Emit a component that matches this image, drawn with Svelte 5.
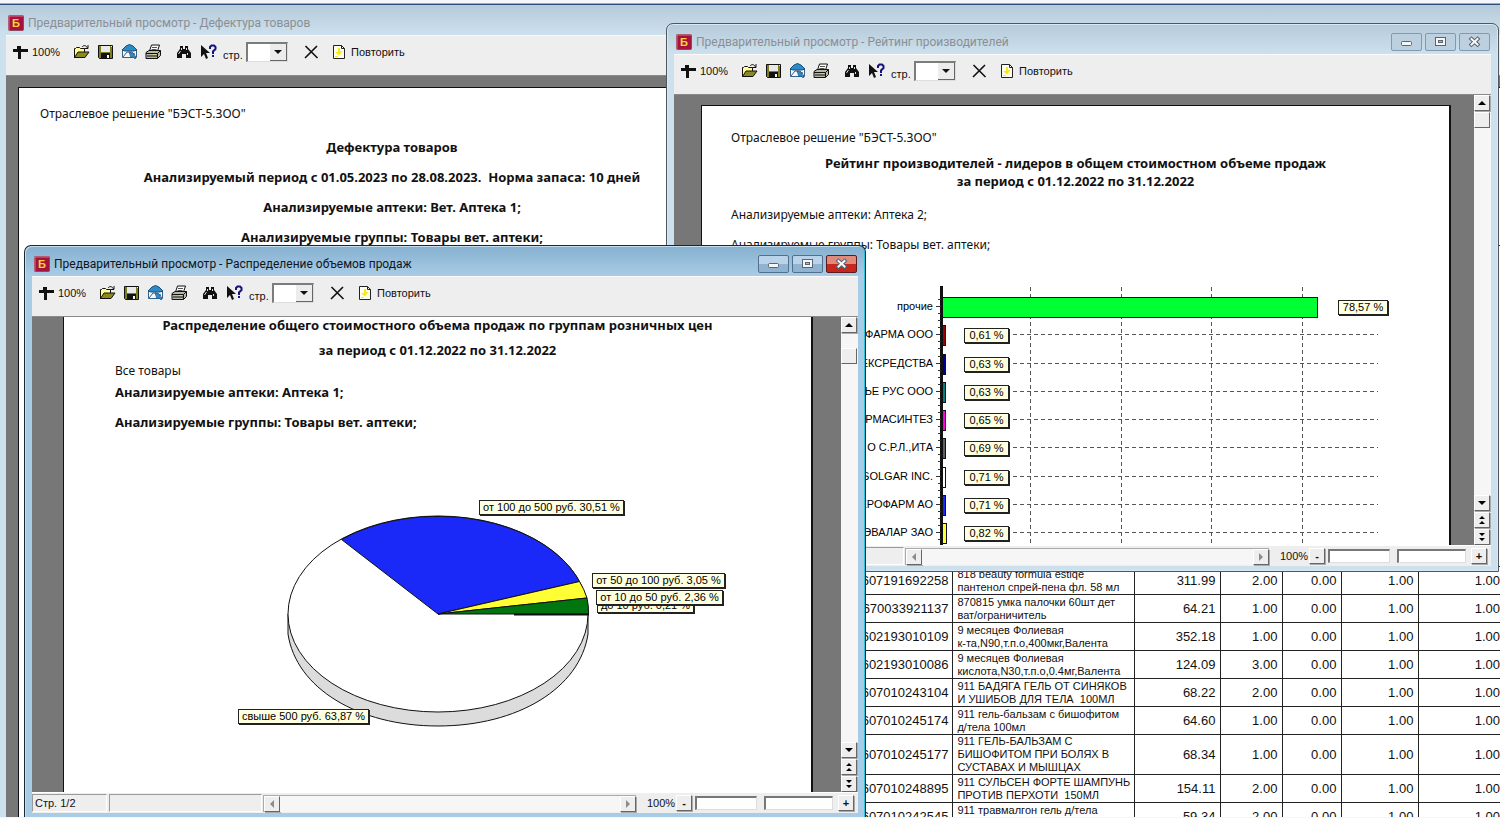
<script>
	const rows = [
		{ code: '607191692258', name: ['818 beauty formula estiqe', 'пантенол спрей-пена фл. 58 мл'], price: '311.99', qty: '2.00' },
		{ code: '670033921137', name: ['870815 умка палочки 60шт дет', 'ват/ограничитель'], price: '64.21', qty: '1.00' },
		{ code: '602193010109', name: ['9 месяцев Фолиевая', 'к-та,N90,т.п.о,400мкг,Валента'], price: '352.18', qty: '1.00' },
		{ code: '602193010086', name: ['9 месяцев Фолиевая', 'кислота,N30,т.п.о,0.4мг,Валента'], price: '124.09', qty: '3.00' },
		{ code: '607010243104', name: ['911 БАДЯГА ГЕЛЬ ОТ СИНЯКОВ', 'И УШИБОВ ДЛЯ ТЕЛА  100МЛ'], price: '68.22', qty: '2.00' },
		{ code: '607010245174', name: ['911 гель-бальзам с бишофитом', 'д/тела 100мл'], price: '64.60', qty: '1.00' },
		{ code: '607010245177', name: ['911 ГЕЛЬ-БАЛЬЗАМ С', 'БИШОФИТОМ ПРИ БОЛЯХ В', 'СУСТАВАХ И МЫШЦАХ'], price: '68.34', qty: '1.00' },
		{ code: '607010248895', name: ['911 СУЛЬСЕН ФОРТЕ ШАМПУНЬ', 'ПРОТИВ ПЕРХОТИ  150МЛ'], price: '154.11', qty: '2.00' },
		{ code: '607010242545', name: ['911 травмалгон гель д/тела', ''], price: '59.34', qty: '2.00' }
	];

	const bars = [
		{ name: 'прочие', value: '78,57 %', width: 375, color: '#00ff33' },
		{ name: 'ФАРМА ООО', value: '0,61 %', width: 3, color: '#a00000' },
		{ name: 'ЕКСРЕДСТВА', value: '0,63 %', width: 3, color: '#000090' },
		{ name: 'ВЬЕ РУС ООО', value: '0,63 %', width: 3, color: '#008080' },
		{ name: 'АРМАСИНТЕЗ', value: '0,65 %', width: 3, color: '#ff00e0' },
		{ name: 'О С.Р.Л.,ИТА', value: '0,69 %', width: 3, color: '#606060' },
		{ name: 'SOLGAR INC.', value: '0,71 %', width: 3, color: '#ffffff' },
		{ name: 'ЕРОФАРМ АО', value: '0,71 %', width: 3, color: '#1a28f8' },
		{ name: 'ЭВАЛАР ЗАО', value: '0,82 %', width: 4, color: '#ffff33' }
	];
	const barY = (i) => Math.round(51 + i * 28.25);

	const marks = [
		{ text: 'до 10 руб. 0,21 %', x: 533, y: 168, w: 97 },
		{ text: 'от 50 до 100 руб. 3,05 %', x: 528, y: 143, w: 133 },
		{ text: 'от 10 до 50 руб. 2,36 %', x: 532, y: 160, w: 127 },
		{ text: 'от 100 до 500 руб. 30,51 %', x: 415, y: 70, w: 145 },
		{ text: 'свыше 500 руб. 63,87 %', x: 174, y: 279, w: 131 }
	];
</script>

{#snippet titlebar(title, active, buttons)}
	<header class="titlebar">
		<svg class="logo" width="16" height="16" viewBox="0 0 16 16">
			<rect x="0.5" y="0.5" width="15" height="15" rx="1" fill="#a5123c" stroke="#8c4a5c" />
			<path d="M1 15V1h14" fill="none" stroke="#d8708c" />
			<text x="8" y="12" text-anchor="middle" font-size="11" font-weight="bold" fill="#ffd23c">Б</text>
		</svg>
		<h1>{title}</h1>
		{#if buttons}
			<div class="winbtns">
				<button aria-label="Свернуть">
					<svg width="29" height="16" viewBox="0 0 29 16"><rect x="9.5" y="7.5" width="10" height="4" rx="1" fill="#f4f6f8" stroke="#5a6472" /></svg>
				</button>
				<button aria-label="Развернуть">
					<svg width="29" height="16" viewBox="0 0 29 16">
						<rect x="9.5" y="3.5" width="10" height="8" fill="#f4f6f8" stroke="#5a6472" />
						<rect x="12.5" y="6.5" width="4" height="2" fill="#a8c0d4" stroke="#5a6472" />
					</svg>
				</button>
				<button class:close={active} aria-label="Закрыть">
					<svg width="29" height="16" viewBox="0 0 29 16">
						<path d="M11.500 5l6 5.500M17.500 5l-6 5.500" stroke="#56606e" stroke-width="4" stroke-linecap="square" />
						<path d="M11.500 5l6 5.500M17.500 5l-6 5.500" stroke="#f8f8f8" stroke-width="2" stroke-linecap="square" />
					</svg>
				</button>
			</div>
		{/if}
	</header>
{/snippet}

{#snippet toolbar(id)}
	<div class="toolbar">
		<button class="zoom">
			<svg width="15" height="16" viewBox="0 0 15 16"><path d="M4 2h4v3h7v3H8v7H5V8H0V5h4z" fill="#111" /></svg>
			100%
		</button>
		<button class="tool" aria-label="Открыть">
			<svg width="17" height="16" viewBox="0 0 17 16">
				<path d="M1.500 14V4.500h1l1-1h3l1 1h4V8" fill="#ffff9a" stroke="#111" />
				<path d="M1.500 13.500L5 8h11l-4 5.500z" fill="#8c8a1e" stroke="#111" />
				<path d="M9 3c1.500-2 4-2 5.500 1M15 1v3.500h-3.500" fill="none" stroke="#111" />
			</svg>
		</button>
		<button class="tool" aria-label="Сохранить">
			<svg width="15" height="16" viewBox="0 0 15 16">
				<path d="M.5 1.500h14v13h-13l-1-1z" fill="#7e7d20" stroke="#111" />
				<rect x="3" y="2" width="9" height="6" fill="#e8e8e8" />
				<rect x="3" y="9" width="9" height="6" fill="#111" />
				<rect x="9" y="11" width="2" height="3" fill="#f4f4f4" />
				<rect x="13" y="2" width="1" height="1" fill="#eee" />
			</svg>
		</button>
		<button class="tool" aria-label="Отправить">
			<svg width="17" height="16" viewBox="0 0 17 16">
				<path d="M1.500 6L8.500 1l7 5v7.500h-14z" fill="#f4f8fb" stroke="#33628a" />
				<path d="M1 6l4-4 3.500-1.500L12 2l4 4-3 1H4z" fill="#2b8bc8" stroke="#1d4f78" />
				<path d="M2 13l4-5h5l4 5" fill="none" stroke="#557" />
				<path d="M8 8l6 2-2 1 3 3-1 1-3-3-1 2z" fill="#2a8fd0" stroke="#154a70" stroke-width=".6" />
			</svg>
		</button>
		<button class="tool" aria-label="Печать">
			<svg width="17" height="16" viewBox="0 0 17 16">
				<path d="M4.500 7l2-6h8l-2 6" fill="#fff" stroke="#111" />
				<path d="M7 3.500h5M6.500 5.500h5" stroke="#555" />
				<path d="M1 8.500L4 6.500h11.500v5l-3 3H1z" fill="#b8b8a8" stroke="#111" />
				<path d="M1 9.500h11.500l3-3M12.500 9.500v5M3 14.500h8" fill="none" stroke="#111" />
				<path d="M2 12h10" stroke="#111" />
				<rect x="8" y="10" width="3" height="1" fill="#e8dc30" />
			</svg>
		</button>
		<button class="tool find" aria-label="Найти">
			<svg width="16" height="16" viewBox="0 0 16 16">
				<path d="M4 2h3v3h2V2h3v3l3 4v5h-5v-4H6v4H1V9l3-4z" fill="#111" />
				<path d="M5.500 4v2M4.500 7l-2 3M10.500 4v2M11.500 9v2" stroke="#ddd" />
			</svg>
		</button>
		<button class="tool" aria-label="Справка">
			<svg width="17" height="16" viewBox="0 0 17 16">
				<path d="M1 1v12l3-3 2 5 2-1-2-5h4z" fill="#111" />
				<path d="M10 5V3l1.500-1.500h2.500L15.500 3v2L13 7.500V10" fill="none" stroke="#14147c" stroke-width="2" />
				<rect x="12" y="11" width="2" height="2" fill="#14147c" />
			</svg>
		</button>
		<label for={id}>стр.</label>
		<span class="combo">
			<select {id}><option></option></select>
			<svg width="16" height="16" viewBox="0 0 16 16"><path d="M4 6h8l-4 4z" fill="#111" /></svg>
		</span>
		<button class="tool cancel" aria-label="Закрыть просмотр">
			<svg width="16" height="16" viewBox="0 0 16 16"><path d="M2.500 2l12 12M14 2L2 14" fill="none" stroke="#111" stroke-width="1.600" /></svg>
		</button>
		<button class="repeat">
			<svg width="12" height="14" viewBox="0 0 12 14">
				<path d="M.5.5h8l3 3v10H.5z" fill="#fffff0" stroke="#222" />
				<path d="M8.500.5v3h3" fill="none" stroke="#222" />
				<path d="M5 3h2v3h2.500L6 10.500 2 7h3z" fill="#f8ea10" />
				<path d="M2 11h3v1H2z" fill="#f8ea10" />
			</svg>
			Повторить
		</button>
	</div>
{/snippet}

{#snippet vscroll(gap)}
	<div class="vscroll">
		<button class="sb" aria-label="Вверх"><svg width="14" height="14" viewBox="0 0 14 14"><path d="M3 9h8L7 5z" /></svg></button>
		<div class="track"><div class="thumb" class:gap></div></div>
		<button class="sb" aria-label="Вниз"><svg width="14" height="14" viewBox="0 0 14 14"><path d="M3 5h8L7 9z" /></svg></button>
		<button class="sb" aria-label="Предыдущая страница"><svg width="14" height="14" viewBox="0 0 14 14"><path d="M4 6h6L7 3zM4 11h6L7 8z" /></svg></button>
		<button class="sb" aria-label="Следующая страница"><svg width="14" height="14" viewBox="0 0 14 14"><path d="M4 3h6L7 6zM4 8h6l-3 3z" /></svg></button>
	</div>
{/snippet}

{#snippet statusbar(page)}
	<footer class="statusbar">
		<div class="panel pages">{page}</div>
		<div class="panel info"></div>
		<div class="hscroll">
			<button class="sb" aria-label="Влево"><svg width="14" height="14" viewBox="0 0 14 14"><path class="dim" d="M9 3v8L5 7z" /></svg></button>
			<div class="track"></div>
			<button class="sb" aria-label="Вправо"><svg width="14" height="14" viewBox="0 0 14 14"><path class="dim" d="M5 3v8l4-4z" /></svg></button>
		</div>
		<span class="percent">100%</span>
		<button class="sb">-</button>
		<div class="field"></div>
		<div class="field wide"></div>
		<button class="sb plus">+</button>
	</footer>
{/snippet}

{#snippet mark(text, x, y, w)}
	<rect x={x + 1} y={y + 1} width={w} height="15" fill="#222" />
	<rect x={x + 0.5} y={y + 0.5} width={w - 1} height="14" fill="#ffffe1" stroke="#222" />
	<text x={x + w / 2} y={y + 11} text-anchor="middle">{text}</text>
{/snippet}

<main class="desktop">
	<section class="window back">
		{@render titlebar('Предварительный просмотр - Дефектура товаров', false, false)}
		<div class="client">
			{@render toolbar('page-defect')}
			<div class="view">
				<article class="sheet">
					<div class="report">
						<p>Отраслевое решение "БЭСТ-5.ЗОО"</p>
						<h2>Дефектура товаров</h2>
						<h2>Анализируемый период с 01.05.2023 по 28.08.2023.&nbsp; Норма запаса: 10 дней</h2>
						<h2>Анализируемые аптеки: Вет. Аптека 1;</h2>
						<h2>Анализируемые группы: Товары вет. аптеки;</h2>
					</div>
					<table>
						<colgroup>
							<col />
							<col class="c-name" />
							<col class="c-price" />
							<col class="c-qty" />
							<col class="c-rest" />
							<col class="c-norm" />
							<col class="c-need" />
						</colgroup>
						<tbody>
							<tr class="head"><td colspan="7"></td></tr>
							{#each rows as row}
								<tr>
									<td class="code">{row.code}</td>
									<td class="name">{#each row.name as line}<div>{line}</div>{/each}</td>
									<td>{row.price}</td>
									<td>{row.qty}</td>
									<td>0.00</td>
									<td>1.00</td>
									<td>1.00</td>
								</tr>
							{/each}
						</tbody>
					</table>
				</article>
			</div>
		</div>
	</section>

	<section class="window rating">
		{@render titlebar('Предварительный просмотр - Рейтинг производителей', false, true)}
		<div class="client">
			{@render toolbar('page-rating')}
			<div class="view">
				<article class="sheet">
					<p>Отраслевое решение "БЭСТ-5.ЗОО"</p>
					<h2>Рейтинг производителей - лидеров в общем стоимостном объеме продаж</h2>
					<h2 class="period">за период с 01.12.2022 по 31.12.2022</h2>
					<p class="first">Анализируемые аптеки: Аптека 2;</p>
					<p class="second">Анализируемые группы: Товары вет. аптеки;</p>
					<svg class="chart" width="746" height="300" viewBox="0 0 746 300">
						<g stroke="#555" stroke-dasharray="4 3">
							{#each [328, 419, 509, 600] as x}
								<line x1={x + 0.5} y1="32" x2={x + 0.5} y2="300" />
							{/each}
							{#each bars.slice(1) as bar, i}
								<line x1="311" y1={barY(i + 1) + 0.5} x2="676" y2={barY(i + 1) + 0.5} />
							{/each}
						</g>
						<rect x="238" y="31" width="3" height="269" fill="#111" />
						{#each bars as bar, i}
							<path d="M234 {barY(i) + 0.5}h5M236 {barY(i) - 6.5}h3M236 {barY(i) + 7.500}h3M236 {barY(i) + 14.500}h3" stroke="#333" />
							<rect x="240.5" y={barY(i) - 8.5} width={bar.width} height="20" fill={bar.color} stroke="#111" />
							<text x="231" y={barY(i) + 4} text-anchor="end">{bar.name}</text>
							{#if i === 0}
								{@render mark(bar.value, 636, barY(i) - 6, 50)}
							{:else}
								{@render mark(bar.value, 262, barY(i) - 6, 45)}
							{/if}
						{/each}
					</svg>
				</article>
				{@render vscroll(false)}
			</div>
			{@render statusbar('')}
		</div>
	</section>

	<section class="window active">
		{@render titlebar('Предварительный просмотр - Распределение объемов продаж', true, true)}
		<div class="client">
			{@render toolbar('page-prices')}
			<div class="view">
				<article class="sheet">
					<h2>Распределение общего стоимостного объема продаж по группам розничных цен</h2>
					<h2 class="period">за период с 01.12.2022 по 31.12.2022</h2>
					<p class="all">Все товары</p>
					<p class="shops">Анализируемые аптеки: Аптека 1;</p>
					<p class="groups">Анализируемые группы: Товары вет. аптеки;</p>
					<svg class="pie" width="746" height="340" viewBox="0 0 746 340">
						<g stroke="#111" stroke-linejoin="round">
							<path d="M224 184v20C232 258 294 296 374 296S516 258 524 204v-20z" fill="#dcdcdc" />
							<ellipse cx="374" cy="184" rx="150" ry="98" fill="#fff" />
							<path d="M374 184L277.500 109.500A150 98 0 0 1 515.500 151.500z" fill="#1a28f8" />
							<path d="M374 184L515.500 151.500A150 98 0 0 1 523 168z" fill="#ffff33" />
							<path d="M374 184L523 168A150 98 0 0 1 524.500 184z" fill="#007510" />
							<path d="M450 184.500h75" stroke-width="2" />
						</g>
						{#each marks as m}
							{@render mark(m.text, m.x, m.y, m.w)}
						{/each}
					</svg>
				</article>
				{@render vscroll(true)}
			</div>
			{@render statusbar('Стр. 1/2')}
		</div>
	</section>
</main>

<style>
	:global(body) {
		background: #f3f7fb;
		overflow: hidden;
	}

	.desktop {
		position: relative;
		height: 100vh;
		overflow: hidden;
		font-family: "Liberation Sans", Arial, sans-serif;
		font-size: 11px;
		color: #111;
	}

	button,
	select {
		font: inherit;
		color: inherit;
		margin: 0;
		padding: 0;
		border: 0;
		background: none;
	}

	button svg {
		display: block;
		flex: none;
	}

	/* windows */
	.window {
		position: absolute;
		box-sizing: border-box;
		display: flex;
		flex-direction: column;
		padding: 0 7px 5px;
		border: 1px solid #50565e;
		border-radius: 7px 7px 0 0;
		background: linear-gradient(#b5cad9, #cde0ee 30px);
		box-shadow: inset 0 0 0 1px #d8e8f4;
		overflow: hidden;
	}

	.back {
		left: -2px;
		right: 0;
		top: 4px;
		bottom: 1px;
		padding: 0 0 0 7px;
		border-width: 1px 0 0 1px;
		border-color: #2e4f78;
		border-radius: 0;
		box-shadow: 0 -1px 0 #7ab4e4;
	}

	.rating {
		left: 666px;
		right: 1px;
		top: 23px;
		height: 549px;
	}

	.active {
		left: 24px;
		width: 842px;
		top: 245px;
		bottom: 1px;
		padding-bottom: 4px;
		border-color: #1c2630;
		border-bottom: 0;
		background: linear-gradient(#86b0cf, #a8cce6 30px);
		box-shadow: inset -1px 0 0 #2fc4dc, inset 1px 1px 0 #c4dff0;
	}

	.titlebar {
		flex: none;
		display: flex;
		align-items: center;
		height: 30px;
		padding: 5px 1px 0 2px;
		box-sizing: border-box;
	}

	.logo {
		margin-right: 4px;
	}

	h1 {
		flex: 1;
		margin: 0;
		font: 12px/16px Roboto, "Segoe UI", sans-serif;
		color: #8b8f94;
		white-space: nowrap;
	}

	.active h1 {
		color: #10151c;
	}

	.winbtns {
		display: flex;
		gap: 3px;
	}

	.winbtns button {
		width: 31px;
		height: 18px;
		box-sizing: border-box;
		border: 1px solid #8398b2;
		border-radius: 2px;
		background: #bdd0e0;
		overflow: hidden;
	}

	.active .winbtns button {
		border-color: #51708e;
		background: linear-gradient(#b9d3e8 50%, #8fb3d0 50%);
	}

	.active .winbtns .close {
		border-color: #5c1a1a;
		background: linear-gradient(#e08a7c 50%, #c8281c 50%);
	}

	.client {
		flex: 1;
		min-height: 0;
		display: flex;
		flex-direction: column;
		background: #eee;
	}

	/* toolbar */
	.toolbar {
		flex: none;
		display: flex;
		align-items: center;
		box-sizing: border-box;
		height: 41px;
		padding: 0 7px 7px;
		border-top: 1px solid #fafafa;
		border-bottom: 1px solid #8a8a8a;
		white-space: nowrap;
	}

	.zoom,
	.repeat {
		display: flex;
		align-items: center;
		gap: 4px;
	}

	.zoom {
		width: 56px;
	}

	.repeat {
		gap: 6px;
		margin-left: 10px;
	}

	.tool {
		display: flex;
		justify-content: center;
		width: 24px;
	}

	.find {
		margin-left: 7px;
	}

	.toolbar label {
		width: 23px;
		margin-left: 3px;
		padding-top: 6px;
	}

	.combo {
		position: relative;
		display: flex;
		width: 42px;
		height: 20px;
		box-sizing: border-box;
		border: 2px solid #7c7c7c;
		border-right: 1px solid #ddd;
		border-bottom: 1px solid #ddd;
		background: #fff;
	}

	.combo select {
		appearance: none;
		width: 100%;
		height: 100%;
	}

	.combo svg {
		position: absolute;
		top: 0;
		right: 0;
		background: #ececec;
		border-right: 1px solid #666;
		border-bottom: 1px solid #666;
		pointer-events: none;
	}

	.cancel {
		margin-left: 11px;
	}

	/* preview area */
	.view {
		flex: 1;
		min-height: 0;
		display: flex;
		overflow: hidden;
		background: #777;
	}

	.sheet {
		flex: 1;
		min-width: 0;
		overflow: hidden;
		box-sizing: border-box;
		border: 1px solid #111;
		border-width: 1px 2px 0 1px;
		background: #fff;
		font: 12px/16px "Noto Sans", Tahoma, sans-serif;
	}

	.sheet h2,
	.sheet p {
		margin: 0;
		font-size: 12px;
		white-space: nowrap;
	}

	.sheet h2,
	.active .shops,
	.active .groups {
		font: bold 13px/16px "Noto Sans", Tahoma, sans-serif;
	}

	.sheet h2 {
		text-align: center;
	}

	.back .sheet {
		margin: 11px 0 0 12px;
		border-right: 0;
	}

	.report {
		width: 746px;
		padding-top: 18px;
	}

	.report p {
		margin: 0 0 17px 21px;
	}

	.report h2 {
		margin-bottom: 14px;
	}

	.report h2:last-child {
		margin-bottom: 0;
	}

	table {
		width: calc(100% - 19px);
		margin-left: 19px;
		table-layout: fixed;
		border-collapse: collapse;
		font: 13px/13px "Liberation Sans", Arial, sans-serif;
	}

	tr {
		height: 28px;
	}

	.head {
		height: 321px;
	}

	td {
		padding: 0 5px;
		border: 1px solid #222;
		text-align: right;
	}

	td:first-child {
		border-left: 0;
	}

	td:last-child {
		padding-right: 0;
		border-right: 0;
	}

	.code {
		padding-right: 4px;
	}

	.name {
		padding: 0 4px;
		text-align: left;
		font-size: 11px;
		white-space: pre;
	}

	.name div {
		height: 13px;
	}

	.c-name { width: 182px; }
	.c-price { width: 86px; }
	.c-qty { width: 62px; }
	.c-rest { width: 59px; }
	.c-norm { width: 77px; }
	.c-need { width: 81px; }

	.rating .sheet {
		margin: 10px 23px 0 27px;
		padding-top: 24px;
	}

	.rating p {
		margin: 0 29px 9px;
	}

	.rating .period {
		margin: 2px 0 18px;
	}

	.rating .first {
		margin-bottom: 14px;
	}

	.rating .second {
		margin-bottom: 2px;
	}

	.active .sheet {
		margin: 0 28px 0 31px;
		border-top: 0;
	}

	.active .period {
		margin: 9px 0 5px;
	}

	.active p {
		margin-left: 51px;
	}

	.active .all {
		margin-bottom: 5px;
	}

	.active .shops {
		margin-bottom: 14px;
	}

	.chart,
	.pie {
		display: block;
		font: 11px "Liberation Sans", Arial, sans-serif;
	}

	/* scrollbars */
	.sb {
		flex: none;
		display: flex;
		align-items: center;
		justify-content: center;
		width: 16px;
		height: 16px;
		box-sizing: border-box;
		border: 1px solid #fff;
		border-right-color: #666;
		border-bottom-color: #666;
		background: #eee;
		box-shadow: 1px 1px 0 #aaa;
		font-weight: bold;
	}

	.dim {
		fill: #8c8c8c;
	}

	.vscroll {
		flex: none;
		display: flex;
		flex-direction: column;
		gap: 1px;
		width: 17px;
		background: #f4f4f4;
	}

	.track {
		flex: 1;
		background: #f6f6f6;
	}

	.thumb {
		width: 16px;
		height: 16px;
		box-sizing: border-box;
		border: 1px solid #fff;
		border-right-color: #666;
		border-bottom-color: #666;
		background: #eee;
	}

	.thumb.gap {
		margin-top: 14px;
	}

	.statusbar {
		flex: none;
		display: flex;
		align-items: center;
		height: 20px;
		border-top: 1px solid #fff;
	}

	.panel {
		box-sizing: border-box;
		height: 18px;
		border: 1px solid #9a9a9a;
		border-right-color: #fff;
		border-bottom-color: #fff;
		line-height: 16px;
		white-space: nowrap;
	}

	.pages {
		width: 75px;
		margin-right: 2px;
		padding-left: 2px;
	}

	.info {
		width: 153px;
		margin-right: 1px;
	}

	.hscroll {
		flex: 1;
		display: flex;
		border: 1px solid #aaa;
		border-width: 1px 0 0 1px;
	}

	.percent {
		width: 29px;
		margin-left: 11px;
	}

	.field {
		width: 62px;
		height: 14px;
		margin-left: 3px;
		box-sizing: border-box;
		border: 2px solid #777;
		border-right: 1px solid #ddd;
		border-bottom: 1px solid #ddd;
		background: #fff;
	}

	.wide {
		width: 69px;
		margin-left: 7px;
	}

	.plus {
		margin: 0 4px 0 5px;
	}
</style>
